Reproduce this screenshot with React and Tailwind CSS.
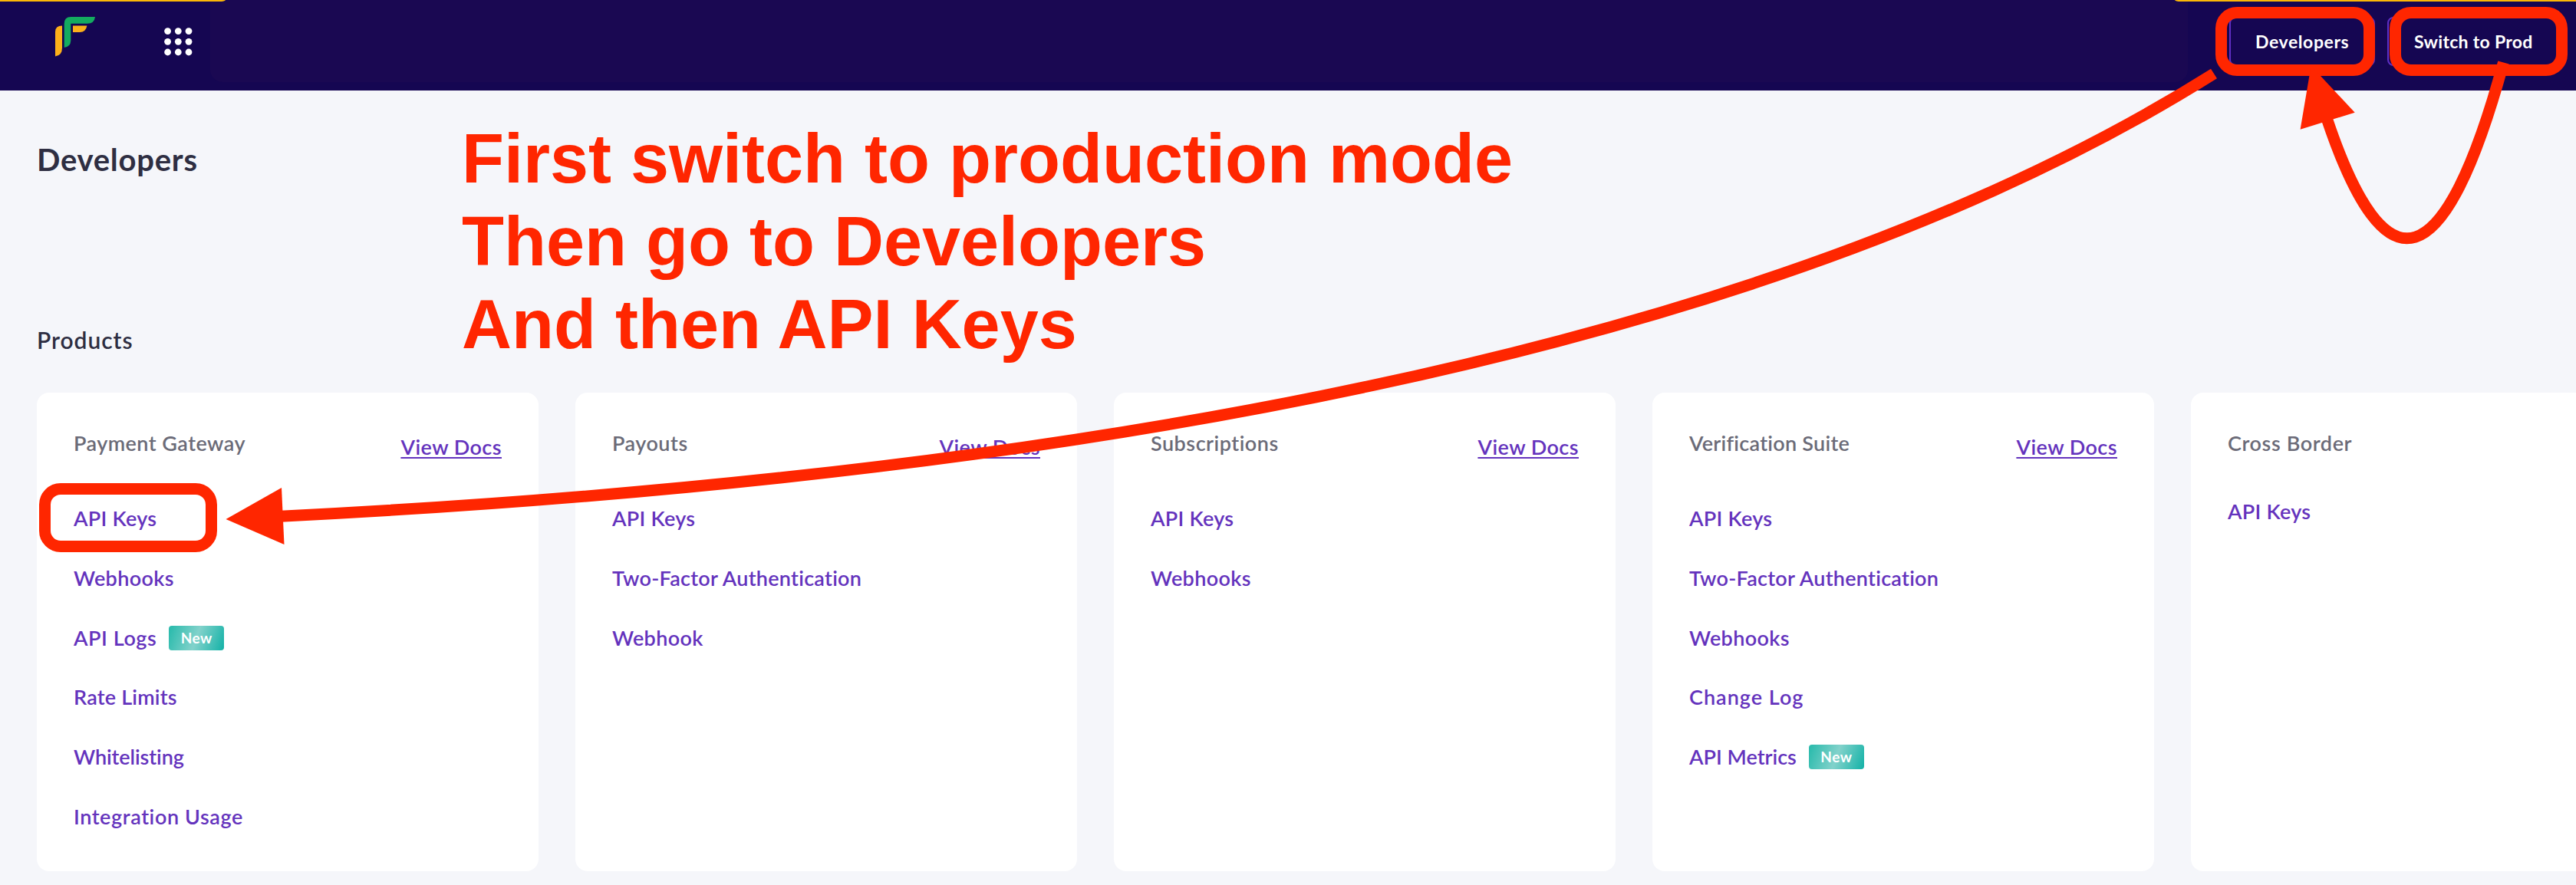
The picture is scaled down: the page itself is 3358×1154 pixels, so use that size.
const products = [
  {
    name: "Payment Gateway",
    nameTracking: "tracking-[0.45px]",
    docs: true,
    links: [
      { label: "API Keys", tracking: "tracking-[0.25px]" },
      { label: "Webhooks", tracking: "tracking-[0.35px]" },
      { label: "API Logs", tracking: "tracking-[0.55px]", isNew: true },
      { label: "Rate Limits", tracking: "tracking-[0.2px]" },
      { label: "Whitelisting", tracking: "tracking-[-0.08px]" },
      { label: "Integration Usage", tracking: "tracking-[0.6px]" },
    ],
  },
  {
    name: "Payouts",
    nameTracking: "tracking-[0.5px]",
    docs: true,
    links: [
      { label: "API Keys", tracking: "tracking-[0.25px]" },
      { label: "Two-Factor Authentication", tracking: "tracking-[0.27px]" },
      { label: "Webhook", tracking: "tracking-[0.35px]" },
    ],
  },
  {
    name: "Subscriptions",
    nameTracking: "tracking-[0.5px]",
    docs: true,
    links: [
      { label: "API Keys", tracking: "tracking-[0.25px]" },
      { label: "Webhooks", tracking: "tracking-[0.35px]" },
    ],
  },
  {
    name: "Verification Suite",
    nameTracking: "tracking-[0.27px]",
    docs: true,
    links: [
      { label: "API Keys", tracking: "tracking-[0.25px]" },
      { label: "Two-Factor Authentication", tracking: "tracking-[0.27px]" },
      { label: "Webhooks", tracking: "tracking-[0.35px]" },
      { label: "Change Log", tracking: "tracking-[1px]" },
      { label: "API Metrics", tracking: "tracking-[0px]", isNew: true },
    ],
  },
  {
    name: "Cross Border",
    nameTracking: "tracking-[0.6px]",
    docs: false,
    links: [{ label: "API Keys", tracking: "tracking-[0.25px]" }],
  },
];

function Logo() {
  return (
    <svg width="53" height="52" viewBox="0 0 53 52" className="shrink-0">
      <path d="M0 51.5V19.5Q0 11.5 9 11.5V40.5Q9 50.5 0 51.5Z" fill="#fdb01a" />
      <path
        d="M11.7 40V9Q11.7 0 20.5 0H52Q51 8.7 42 8.7H20.3V31Q20 39 11.7 40Z"
        fill="#14ab60"
      />
      <path d="M23 11.6H41.4Q40 20 32 20H23Z" fill="#fdb01a" />
    </svg>
  );
}

function AppsGrid() {
  return (
    <svg width="37" height="37" viewBox="0 0 37 37" className="shrink-0" fill="#fff">
      {[4.6, 18.3, 32].map((y) =>
        [4.6, 18.3, 32].map((x) => <circle key={`${x}-${y}`} cx={x} cy={y} r="4.4" />)
      )}
    </svg>
  );
}

function NewBadge() {
  return (
    <span className="flex h-8 w-[72px] items-center justify-center rounded-[4px] bg-[linear-gradient(110deg,#2fbcae_5%,#82d2cb_50%,#17b3a8_98%)] text-[19px] font-bold tracking-[0.5px] text-white">
      New
    </span>
  );
}

function ProductCard({ product }) {
  return (
    <section className="h-[624px] w-[654px] shrink-0 rounded-2xl bg-white px-12 pt-[49.6px] text-[27px] leading-8 font-semibold">
      <div className="flex items-start justify-between">
        <h3 className={`font-semibold text-[#6b6b78] ${product.nameTracking}`}>{product.name}</h3>
        {product.docs && (
          <a className="flex h-[41px] pt-[5px] tracking-[0.45px] text-[#6433bd]">
            <span className="underline decoration-2 underline-offset-[3px]">View Docs</span>
          </a>
        )}
      </div>
      <ul className="mt-[34.6px] text-[#6433bd]">
        {product.links.map((link) => (
          <li key={link.label} className="flex h-[77.8px] items-center gap-4">
            <a className={link.tracking}>{link.label}</a>
            {link.isNew && <NewBadge />}
          </li>
        ))}
      </ul>
    </section>
  );
}

function Highlight({ className }) {
  return (
    <div className={`absolute h-[90px] rounded-[28px] border-[15px] border-[#ff2600] ${className}`} />
  );
}

function Annotations() {
  return (
    <div className="pointer-events-none absolute inset-0 overflow-hidden">
      <p className="absolute top-[153px] left-[602px] font-['Liberation_Sans',sans-serif] text-[90px] leading-[108px] font-bold whitespace-pre text-[#ff2600]">
        First switch to production mode
        <br />
        Then go to Developers
        <br />
        And then API Keys
      </p>
      <Highlight className="top-[9px] left-[2888px] w-[208px]" />
      <Highlight className="top-[9px] left-[3115px] w-[232px]" />
      <Highlight className="top-[630px] left-[51px] w-[232px]" />
      <svg width="3358" height="1154" viewBox="0 0 3358 1154" className="absolute inset-0">
        <g fill="none" stroke="#ff2600" strokeWidth="15">
          <path d="M2886 96Q2108 586 366 673.2" />
          <path d="M3263.5 81.5Q3149 500.4 3033 154" />
        </g>
        <g fill="#ff2600">
          <path d="M294.5 677L367 636L370.5 710Z" />
          <path d="M3012.6 85.8L3069.7 146.7L2998.6 168.7Z" />
        </g>
      </svg>
    </div>
  );
}

export default function App() {
  return (
    <div className="relative h-[1154px] w-[3358px] overflow-hidden bg-[#f5f6fa] font-['Lato',sans-serif] [font-variant-ligatures:none]">
      <header className="relative flex h-[118px] items-start bg-[#150652] pl-[72px]">
        <div className="absolute top-0 left-[274px] h-[107px] w-[2578px] rounded-b-2xl bg-[#1a0852]" />
        <div className="absolute inset-x-0 top-0 flex justify-between">
          <div className="h-[2px] w-[294px] rounded-br-[8px_2px] bg-[#fbb707]" />
          <div className="h-[2px] w-[523px] rounded-bl-[8px_2px] bg-[#fbb707]" />
        </div>
        <div className="mt-[22px]">
          <Logo />
        </div>
        <div className="mt-[35.7px] ml-[88.7px]">
          <AppsGrid />
        </div>
        <div className="mt-[22px] mr-[20px] ml-auto flex gap-4 text-[23px] font-bold text-white">
          <button className="relative flex h-16 w-[190px] items-center rounded-lg border-2 border-[#5f2fc4] bg-[#150652] pl-[32px] tracking-[0.6px]">
            Developers
          </button>
          <button className="flex h-16 w-[226px] items-center rounded-lg border-2 border-[#5f2fc4] bg-[#150652] pl-[33px] tracking-[0.3px]">
            Switch to Prod
          </button>
        </div>
      </header>
      <main className="px-12 pt-[66px]">
        <h1 className="text-[40px] leading-[48px] font-bold tracking-[0.75px] text-[#2e2e42]">
          Developers
        </h1>
        <h2 className="mt-[193px] text-[30px] leading-9 font-semibold tracking-[0.95px] text-[#2e2e42]">
          Products
        </h2>
        <div className="mt-[51px] flex gap-12">
          {products.map((p) => (
            <ProductCard key={p.name} product={p} />
          ))}
        </div>
      </main>
      <Annotations />
    </div>
  );
}
